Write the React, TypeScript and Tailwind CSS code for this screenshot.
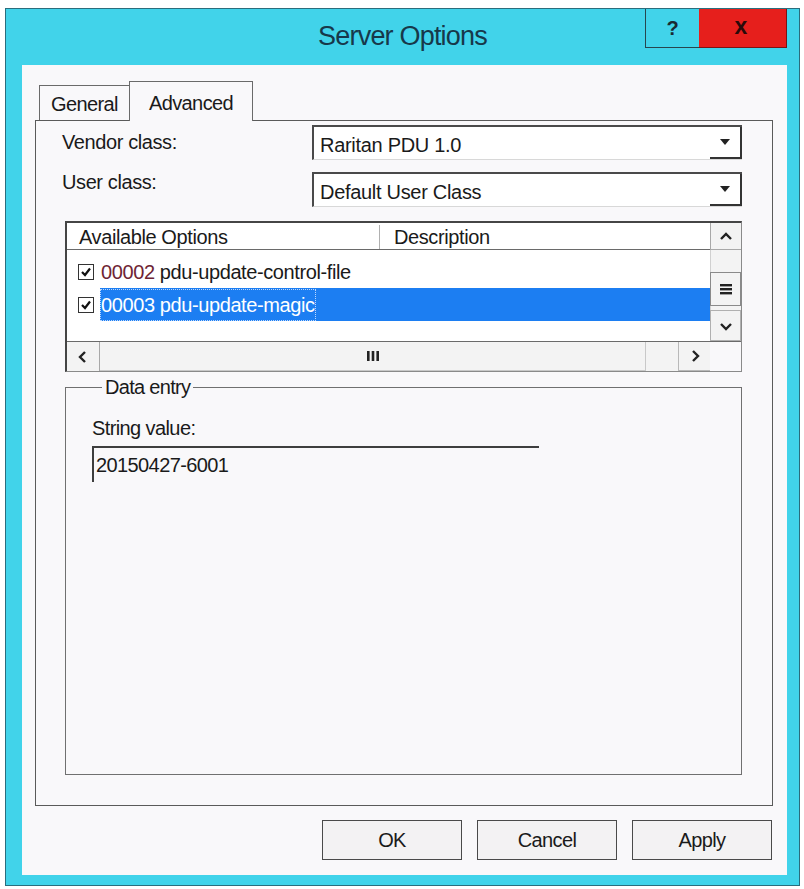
import type { ReactNode } from 'react'

const font = "font-['Liberation_Sans',Arial,sans-serif]"

function Chevron({ dir }: { dir: 'up' | 'down' | 'left' | 'right' }) {
  const pts = {
    up: '3,11 8,6 13,11',
    down: '3,6 8,11 13,6',
    left: '10,3 5,8 10,13',
    right: '6,3 11,8 6,13',
  }[dir]
  return (
    <svg width="16" height="16" viewBox="0 0 16 16" aria-hidden>
      <polyline points={pts} fill="none" stroke="#222" strokeWidth="2.4" />
    </svg>
  )
}

function CheckBox() {
  return (
    <span className="flex h-[16px] w-[16px] items-center justify-center border-[1.5px] border-[#333] bg-white">
      <svg width="12" height="12" viewBox="0 0 12 12" aria-hidden>
        <polyline points="2,6 5,9 10,2.5" fill="none" stroke="#111" strokeWidth="2.2" />
      </svg>
    </span>
  )
}

function Combo({ value }: { value: string }) {
  return (
    <div className="flex h-[35px] w-[430px] border-t-2 border-l-2 border-b border-[#4a4a4a] border-b-[#d8d8d8] bg-white">
      <span className="flex flex-1 items-center pl-[6px] pt-[3px] text-[20px] tracking-[-0.3px]">{value}</span>
      <span className="flex w-[32px] items-center justify-center border-r-2 border-b-2 border-[#333]">
        <svg width="12" height="8" viewBox="0 0 12 8" aria-hidden>
          <polygon points="1,1 11,1 6,7" fill="#222" />
        </svg>
      </span>
    </div>
  )
}

function OptionRow({ code, name, selected }: { code: string; name: string; selected?: boolean }) {
  return (
    <div className="flex h-[33px] items-center">
      <span className="flex w-[33px] justify-end pr-[6px]">
        <CheckBox />
      </span>
      <span
        className={
          selected
            ? 'flex h-full flex-1 items-center bg-[#1c7ef2] pl-[1px] text-white'
            : 'flex h-full flex-1 items-center pl-[1px] text-[#1a1a1a]'
        }
      >
        <span className={selected ? 'outline-1 outline-dotted outline-[#bcd8ff]' : ''}>
          <span className={selected ? 'text-white' : 'text-[#6e2434]'}>{code}</span> {name}
        </span>
      </span>
    </div>
  )
}

function ScrollBox({ children, className }: { children: ReactNode; className: string }) {
  return <div className={`flex items-center justify-center bg-[#f3f3f3] ${className}`}>{children}</div>
}

function DialogButton({ label }: { label: string }) {
  return (
    <button className="flex h-[40px] w-[140px] items-center justify-center border border-[#4a4a4a] bg-[#f3f2f3] text-[20px] tracking-[-0.6px] text-[#1a1a1a]">
      {label}
    </button>
  )
}

export default function App() {
  return (
    <div className={`h-[889px] w-[804px] bg-white pl-[5px] pt-[8px] text-[#1a1a1a] ${font}`}>
      <div className="flex h-[878px] w-[795px] flex-col border border-[#2b6d7d] bg-[#41d3ea]">
        {/* Caption */}
        <div className="relative flex h-[56px] items-center justify-center pb-[1px]">
          <span className="text-[27px] tracking-[-0.8px] text-[#17384a]">Server Options</span>
          <div className="absolute right-[12px] top-0 flex h-[39px]">
            <span className="flex w-[54px] items-center justify-center border-l border-b border-[#27464f] text-[20px] font-bold text-[#1a2a33]">
              ?
            </span>
            <span className="flex w-[88px] items-center justify-center border-b border-r border-[#7a1414] bg-[#e61f1c] pb-[3px] pr-[3px] text-[23px] font-bold text-[#2a0a0a]">
              x
            </span>
          </div>
        </div>

        {/* Client area */}
        <div className="mb-[10px] ml-[16px] mr-[12px] flex flex-1 flex-col bg-[#f9f8fa] pl-[13px] pr-[14px] pt-[16px] pb-[15px]">
          {/* Tabs */}
          <div className="flex h-[39px] items-end pl-[4px] text-[20px] tracking-[-0.6px]">
            <span className="flex h-[35px] w-[90px] items-center justify-center border border-r-0 border-b-0 border-[#6a6a6a] pt-[1px]">
              General
            </span>
            <span className="relative z-10 -mb-px flex h-[40px] w-[124px] justify-center border border-b-0 border-[#6a6a6a] bg-[#f9f8fa] pt-[6px]">
              Advanced
            </span>
          </div>

          {/* Tab panel */}
          <div className="flex h-[686px] flex-col border border-[#5a5a5a] pl-[29px] pr-[30px] pt-[4px] text-[20px] tracking-[-0.4px]">
            <div className="flex items-start">
              <span className="-ml-[3px] mt-[5px] flex-1 leading-[24px]">Vendor class:</span>
              <Combo value="Raritan PDU 1.0" />
            </div>
            <div className="mt-[12px] flex items-start">
              <span className="-ml-[3px] -mt-[2px] flex-1 leading-[24px]">User class:</span>
              <Combo value="Default User Class" />
            </div>

            {/* Options list */}
            <div className="mt-[14px] flex h-[151px] flex-col border-t-2 border-l-2 border-r border-b border-[#454545] border-r-[#8a8a8a] border-b-[#8a8a8a] bg-white">
              <div className="flex h-[118px]">
                <div className="flex flex-1 flex-col">
                  <div className="flex h-[27px] border-b border-[#6a6a6a] pt-[2px]">
                    <span className="flex w-[313px] items-center border-r border-[#b0b0b0] pl-[12px]">Available Options</span>
                    <span className="flex items-center pl-[14px]">Description</span>
                  </div>
                  <div className="pt-[5px]">
                    <OptionRow code="00002" name="pdu-update-control-file" />
                    <OptionRow code="00003" name="pdu-update-magic" selected />
                  </div>
                </div>
                <div className="flex w-[31px] flex-col bg-[#f3f3f3]">
                  <ScrollBox className="h-[27px] border-l border-b border-[#a8a8a8]">
                    <Chevron dir="up" />
                  </ScrollBox>
                  <div className="h-[22px] border-l border-[#d0d0d0]" />
                  <ScrollBox className="h-[34px] border border-[#8a8a8a]">
                    <svg width="14" height="14" viewBox="0 0 14 14" aria-hidden>
                      <rect x="1" y="2" width="12" height="2.4" fill="#222" />
                      <rect x="1" y="6" width="12" height="2.4" fill="#222" />
                      <rect x="1" y="10" width="12" height="2.4" fill="#222" />
                    </svg>
                  </ScrollBox>
                  <div className="h-[4px] border-l border-[#d0d0d0]" />
                  <ScrollBox className="flex-1 border border-[#b0b0b0]">
                    <Chevron dir="down" />
                  </ScrollBox>
                </div>
              </div>
              <div className="flex flex-1 border-t border-[#6a6a6a] bg-[#f3f3f3]">
                <ScrollBox className="w-[33px] border-r border-[#a8a8a8]">
                  <Chevron dir="left" />
                </ScrollBox>
                <ScrollBox className="w-[546px] border-r border-b border-[#c8c8c8] bg-[#eeeded]">
                  <svg width="14" height="12" viewBox="0 0 14 12" aria-hidden>
                    <rect x="1" y="1" width="2.6" height="10" fill="#222" />
                    <rect x="5.7" y="1" width="2.6" height="10" fill="#222" />
                    <rect x="10.4" y="1" width="2.6" height="10" fill="#222" />
                  </svg>
                </ScrollBox>
                <div className="flex-1" />
                <ScrollBox className="w-[32px] border-l border-b border-[#b8b8b8]">
                  <Chevron dir="right" />
                </ScrollBox>
                <div className="w-[31px] bg-[#f9f8fa]" />
              </div>
            </div>

            {/* Data entry */}
            <fieldset className="mt-[3px] h-[400px] border border-[#707070] pl-[26px]">
              <legend className="ml-[10px] px-[3px] text-[20px] leading-[24px] tracking-[-0.7px]">Data entry</legend>
              <div className="mt-[17px] leading-[24px] tracking-[-0.6px]">String value:</div>
              <div className="mt-[6px] flex h-[36px] w-[447px] items-center border-t-2 border-l-2 border-[#3e3e3e] pl-[2px] tracking-[-0.6px]">
                20150427-6001
              </div>
            </fieldset>
          </div>

          {/* Buttons */}
          <div className="mt-[14px] flex justify-end gap-[15px] pr-[1px]">
            <DialogButton label="OK" />
            <DialogButton label="Cancel" />
            <DialogButton label="Apply" />
          </div>
        </div>
      </div>
    </div>
  )
}
